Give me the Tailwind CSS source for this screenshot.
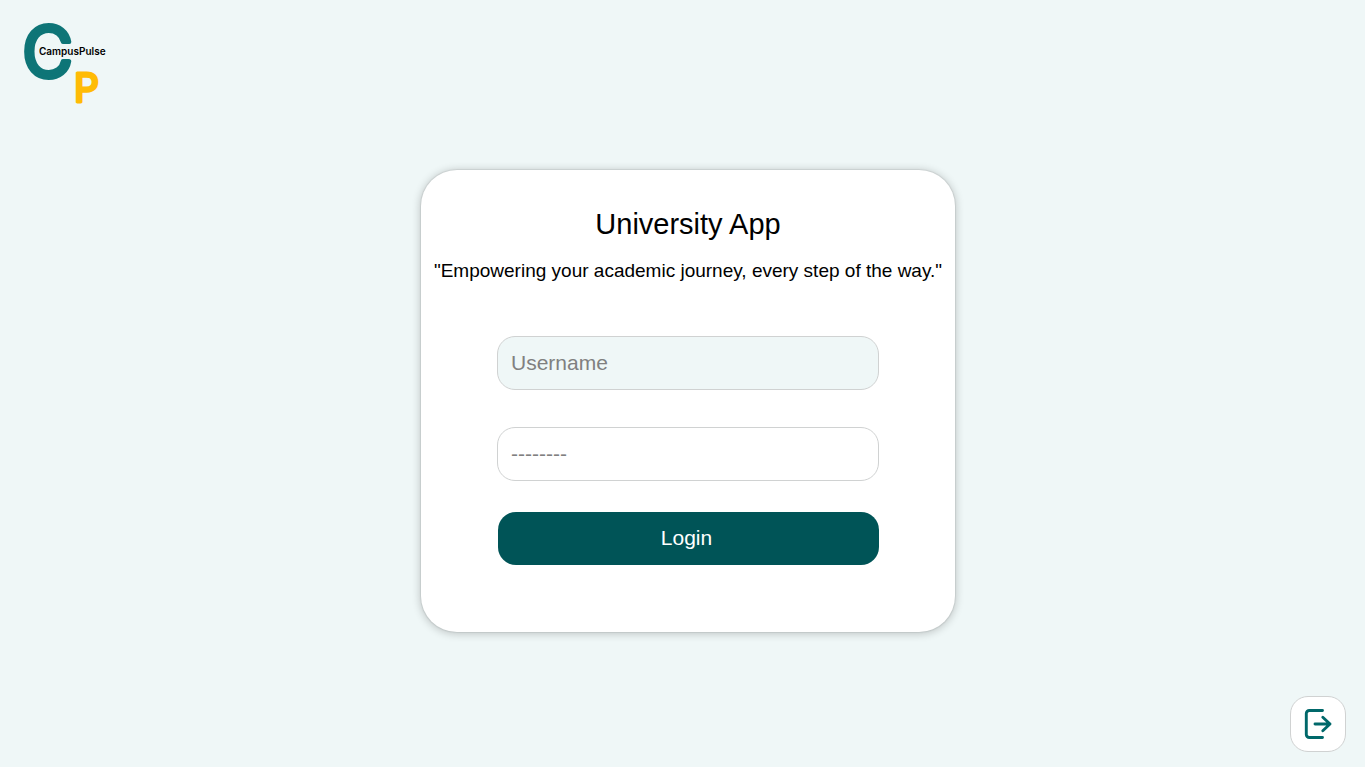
<!DOCTYPE html>
<html lang="en">
<head>
<meta charset="utf-8">
<meta name="viewport" content="width=device-width, initial-scale=1">
<title>CampusPulse - Login</title>
<script src="https://cdn.jsdelivr.net/npm/@tailwindcss/browser@4"></script>
</head>
<body class="flex min-h-screen flex-col bg-[#eff7f7] font-['Liberation_Sans',Arial,sans-serif] text-black">
  <header class="px-[22px] py-6">
    <svg class="block size-20 overflow-visible" viewBox="0 0 80 80" role="img" aria-label="CampusPulse logo">
      <text x="0" y="53" font-family="Inter, sans-serif" font-weight="400" font-size="70" fill="#0e7577" stroke="#0e7577" stroke-width="4" stroke-linejoin="round">C</text>
      <text x="52" y="78" font-family="Inter, sans-serif" font-weight="400" font-size="39" fill="#ffbb05" stroke="#ffbb05" stroke-width="3" stroke-linejoin="round">P</text>
      <text x="17" y="31" font-family="Inter, sans-serif" font-weight="600" font-size="10" fill="#000">CampusPulse</text>
    </svg>
  </header>

  <main class="flex flex-1 items-center justify-center pl-[11px]">
    <section class="w-full max-w-[534px] rounded-[36px] bg-white pt-9 pb-[67px] text-center shadow-[0_0_1px_1px_rgba(0,0,0,0.07),0_1px_8px_1px_rgba(0,0,0,0.2)]">
      <h1 class="text-[29px] leading-9">University App</h1>
      <p class="mt-[17px] text-[19px] leading-6">"Empowering your academic journey, every step of the way."</p>
      <form class="mx-auto mt-[53px] flex w-[382px] max-w-full flex-col">
        <input type="text" aria-label="Username" placeholder="Username" class="h-[54px] w-full rounded-[18px] border border-[#d0d2d2] bg-[#eff7f7] px-[13px] text-[21px] placeholder:text-[#808080]">
        <input type="password" aria-label="Password" placeholder="--------" class="mt-[37px] h-[54px] w-full rounded-[18px] border border-[#d0d2d2] bg-white px-[13px] text-[21px] placeholder:text-[#808080]">
        <button type="button" class="mt-[31px] ml-px h-[53px] rounded-[18px] bg-[#005457] pr-1 pb-0.5 text-[21px] text-white">Login</button>
      </form>
    </section>
  </main>

  <footer class="flex justify-end pt-[22px] pr-[19px] pb-[15px]">
    <button type="button" aria-label="Exit" class="flex size-14 items-center justify-center rounded-[18px] border border-[#d0d2d2] bg-white">
      <svg class="size-8" viewBox="0 0 32 32" fill="none" stroke="#00686a" stroke-width="2.900" stroke-linecap="round" stroke-linejoin="round" aria-hidden="true">
        <path d="M20.500 2.500H7.300a3 3 0 0 0-3 3v21a3 3 0 0 0 3 3H20.500"/>
        <path d="M13 16h15M20.800 9.200L28 16l-7.200 6.800"/>
      </svg>
    </button>
  </footer>
</body>
</html>
